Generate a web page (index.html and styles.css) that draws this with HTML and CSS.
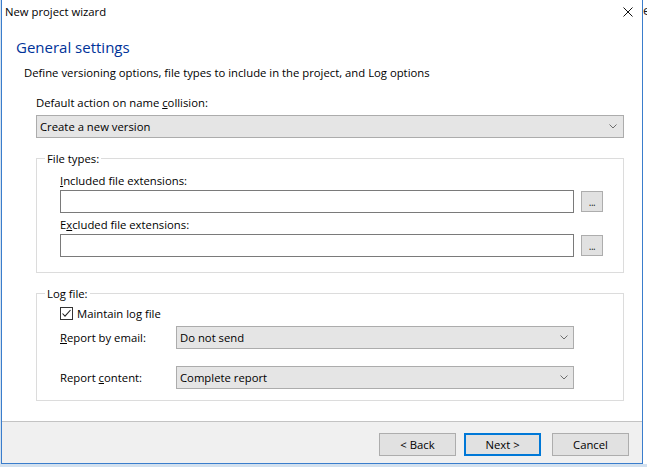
FILE: index.html
```html
<!DOCTYPE html>
<html>
<head>
<meta charset="utf-8">
<link rel="stylesheet" href="styles.css">
</head>
<body>
<div class="desktop">
  <div class="window">
    <div class="titlebar">
      <span class="title">New project wizard</span>
      <svg class="close" width="10" height="10" viewBox="0 0 10 10"><path d="M0.5 0.5 L9.5 9.5 M9.5 0.5 L0.5 9.5" stroke="#111" stroke-width="1" fill="none"/></svg>
    </div>
    <div class="content">
      <h1 class="heading">General settings</h1>
      <p class="desc">Define versioning options, file types to include in the project, and Log options</p>
      <div class="panel">
        <div class="label">Default action on name <u>c</u>ollision:</div>
        <div class="combo combo-wide">
          <span>Create a new version</span>
          <svg class="chev" width="8" height="5" viewBox="0 0 8 5"><polyline points="0.5,0.5 4,4 7.5,0.5" stroke="#6d6d6d" fill="none"/></svg>
        </div>

        <fieldset class="group group-files">
          <legend>File types:</legend>
          <div class="group-body">
            <div class="label"><u>I</u>ncluded file extensions:</div>
            <div class="input-row">
              <div class="input"></div>
              <div class="dots">...</div>
            </div>
            <div class="label label-2">E<u>x</u>cluded file extensions:</div>
            <div class="input-row">
              <div class="input"></div>
              <div class="dots">...</div>
            </div>
          </div>
        </fieldset>

        <fieldset class="group group-log">
          <legend>Log file:</legend>
          <div class="group-body">
            <div class="check-row">
              <span class="checkbox"><svg width="11" height="11" viewBox="0 0 11 11"><polyline points="1.5,5.5 4,8.2 9.5,2" stroke="#222" stroke-width="1.1" fill="none"/></svg></span>
              <span>Maintain log file</span>
            </div>
            <div class="form-row">
              <span class="row-label"><u>R</u>eport by email:</span>
              <div class="combo combo-small">
                <span>Do not send</span>
                <svg class="chev" width="8" height="5" viewBox="0 0 8 5"><polyline points="0.5,0.5 4,4 7.5,0.5" stroke="#6d6d6d" fill="none"/></svg>
              </div>
            </div>
            <div class="form-row form-row-2">
              <span class="row-label">Report <u>c</u>ontent:</span>
              <div class="combo combo-small">
                <span>Complete report</span>
                <svg class="chev" width="8" height="5" viewBox="0 0 8 5"><polyline points="0.5,0.5 4,4 7.5,0.5" stroke="#6d6d6d" fill="none"/></svg>
              </div>
            </div>
          </div>
        </fieldset>
      </div>
    </div>
    <div class="footer">
      <button class="btn">&lt; Back</button>
      <button class="btn btn-default">Next &gt;</button>
      <button class="btn btn-cancel">Cancel</button>
    </div>
  </div>
  <div class="behind"><span class="behind-text">e</span></div>
</div>
</body>
</html>
```

FILE: styles.css
```css
* { box-sizing: border-box; }

html, body {
  margin: 0;
  padding: 0;
  background: #d3e1ef;
}

body {
  font-family: "Segoe UI", "Open Sans", "Noto Sans", sans-serif;
  font-size: 11.3px;
  line-height: 15px;
  color: #000;
}

.desktop {
  display: flex;
  align-items: flex-start;
  width: 647px;
  height: 467px;
  overflow: hidden;
}

.window {
  margin-left: 1px;
  width: 642px;
  height: 464px;
  border: 1px solid #3a7dcc;
  border-top: none;
  background: #fff;
  display: flex;
  flex-direction: column;
}

.titlebar {
  height: 23px;
  display: flex;
  align-items: center;
  justify-content: space-between;
  padding: 0 9px 0 3px;
  line-height: 23px;
  flex: none;
}

.title {
  font-size: 11.3px;
}

.close {
  display: block;
  margin-top: 0;
}

.content {
  flex: 1;
  padding: 0;
}

.heading {
  margin: 14px 0 0 14px;
  font-size: 15px;
  line-height: 20px;
  font-weight: normal;
  color: #003399;
}

.desc {
  margin: 8px 0 0 22px;
}

.panel {
  margin: 15px 0 0 34px;
  width: 588px;
}

.label {
  height: 15px;
}

u {
  text-decoration: underline;
  text-underline-offset: 1px;
}

.combo {
  height: 23px;
  background: #e5e5e5;
  border: 1px solid #acacac;
  display: flex;
  align-items: center;
  justify-content: space-between;
  padding: 0 6px 0 3px;
}

.combo-wide {
  margin-top: 5px;
  padding-right: 6px;
}

.chev {
  display: block;
}

.group {
  margin: 13px 0 0 0;
  border: 1px solid #dcdcdc;
  padding: 7px 19px 15px 8px;
  min-width: 0;
}

.group legend {
  padding: 0 2px;
  line-height: 15px;
  height: 15px;
}

.group-body {
  margin-left: 15px;
}

.input-row {
  margin-top: 2px;
  display: flex;
  align-items: center;
  gap: 7px;
}

.input {
  width: 514px;
  height: 23px;
  border: 1px solid #7a7a7a;
  background: #fff;
}

.dots {
  width: 22px;
  height: 21px;
  background: #e1e1e1;
  border: 1px solid #adadad;
  text-align: center;
  font-size: 10px;
  line-height: 20px;
  color: #222;
  letter-spacing: -0.5px;
}

.label-2 {
  margin-top: 4px;
}

.group-log {
  padding-top: 5px;
  padding-bottom: 11px;
}

.check-row {
  height: 15px;
  display: flex;
  align-items: center;
  gap: 4px;
}

.checkbox {
  width: 13px;
  height: 13px;
  border: 1px solid #333;
  background: #fff;
  display: flex;
  align-items: center;
  justify-content: center;
}

.checkbox svg { display: block; }

.form-row {
  margin-top: 5px;
  display: flex;
  align-items: center;
}

.form-row-2 {
  margin-top: 17px;
}

.row-label {
  width: 116px;
  flex: none;
}

.combo-small {
  width: 398px;
  padding-right: 5px;
}

.footer {
  flex: none;
  height: 42px;
  border-top: 1px solid #c3c3c3;
  background: #f0f0f0;
  display: flex;
  justify-content: flex-end;
  align-items: flex-start;
  padding: 11px 13px 0 0;
}

.btn {
  width: 77px;
  height: 23px;
  margin: 0;
  padding: 0;
  font-family: inherit;
  font-size: 11.3px;
  line-height: 15px;
  color: #000;
  background: #e1e1e1;
  border: 1px solid #adadad;
  border-radius: 0;
}

.btn-default {
  margin-left: 8px;
  border: 2px solid #0078d7;
}

.btn-cancel {
  margin-left: 11px;
}

.behind {
  width: 4px;
  height: 464px;
  background: #fff;
  overflow: hidden;
  flex: none;
}

.behind-text {
  display: block;
  margin: 3px 0 0 0;
  font-size: 13px;
  line-height: 15px;
  color: #1a1a1a;
}
```
